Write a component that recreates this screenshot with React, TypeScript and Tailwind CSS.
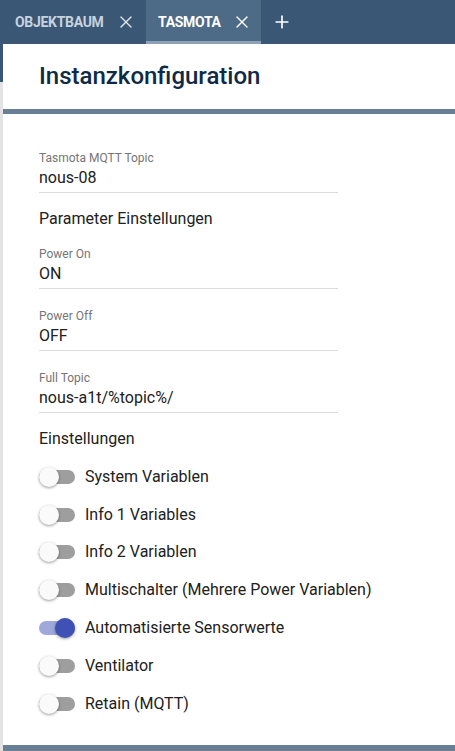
import { X, Plus } from "lucide-react";

type Field = { label: string; value: string };

const topicField: Field = { label: "Tasmota MQTT Topic", value: "nous-08" };

const paramFields: Field[] = [
  { label: "Power On", value: "ON" },
  { label: "Power Off", value: "OFF" },
  { label: "Full Topic", value: "nous-a1t/%topic%/" },
];

const toggles = [
  { label: "System Variablen", on: false },
  { label: "Info 1 Variables", on: false },
  { label: "Info 2 Variablen", on: false },
  { label: "Multischalter (Mehrere Power Variablen)", on: false },
  { label: "Automatisierte Sensorwerte", on: true },
  { label: "Ventilator", on: false },
  { label: "Retain (MQTT)", on: false },
];

function TextField({ field }: { field: Field }) {
  return (
    <div className="w-[299px] border-b border-[#dcdcdc] pb-[5px]">
      <div className="text-[12px] leading-[14px] text-[#757575]">{field.label}</div>
      <div className="mt-[3px] text-[16px] leading-[19px] text-[#212121]">{field.value}</div>
    </div>
  );
}

function Toggle({ on }: { on: boolean }) {
  return (
    <div className="relative h-[20px] w-[36px] shrink-0">
      <div
        className={
          on
            ? "absolute left-0 top-[3px] h-[14px] w-[36px] rounded-full bg-[#9fa8da]"
            : "absolute left-0 top-[3px] h-[14px] w-[36px] rounded-full bg-[#9e9e9e]"
        }
      />
      <div
        className={
          on
            ? "absolute right-0 top-0 h-[20px] w-[20px] rounded-full bg-[#3f51b5] shadow-[0_1px_3px_rgba(0,0,0,0.4)]"
            : "absolute left-0 top-0 h-[20px] w-[20px] rounded-full bg-[#fafafa] shadow-[0_1px_3px_rgba(0,0,0,0.4)]"
        }
      />
    </div>
  );
}

export default function App() {
  return (
    <div
      className="flex h-[751px] w-[455px] flex-col overflow-hidden bg-[#e3e3e3]"
      style={{ fontFamily: "Roboto, 'Liberation Sans', sans-serif" }}
    >
      {/* Tab bar */}
      <div className="flex h-[44px] shrink-0 items-stretch bg-[#3a5775]">
        <div className="flex w-[146px] items-center pl-[15px]">
          <span className="text-[14px] font-bold tracking-[-0.3px] text-[#c8d2dd]">OBJEKTBAUM</span>
          <X className="ml-[12px] h-[20px] w-[20px] text-[#dfe5eb]" strokeWidth={1.6} />
        </div>
        <div className="relative flex w-[115px] items-center bg-[#4d6a87] pl-[12px]">
          <span className="text-[14px] font-bold tracking-[-0.3px] text-white">TASMOTA</span>
          <X className="ml-[11px] h-[20px] w-[20px] text-white" strokeWidth={1.6} />
          <div className="absolute bottom-0 left-0 h-[3px] w-full bg-[#8ea2b7]" />
        </div>
        <div className="flex items-center pl-[11px]">
          <Plus className="h-[20px] w-[20px] text-white" strokeWidth={2} />
        </div>
      </div>

      {/* Body */}
      <div className="flex flex-1">
        <div className="flex w-[3px] shrink-0 flex-col">
          <div className="h-[38px] bg-[#3a5775]" />
        </div>
        <div className="flex flex-1 flex-col bg-white">
          <div className="flex h-[65px] items-center pl-[36px]">
            <h1 className="pb-[2px] text-[24px] font-medium leading-[28px] text-[#102a46]">Instanzkonfiguration</h1>
          </div>
          <div className="h-[5px] bg-[#687f95]" />

          <div className="flex flex-1 flex-col pl-[36px] pt-[37px]">
            <TextField field={topicField} />
            <div className="mt-[16px] text-[16px] leading-[19px] text-[#212121]">Parameter Einstellungen</div>
            <div className="mt-[19px] flex flex-col gap-[20px]">
              {paramFields.map((f) => (
                <TextField key={f.label} field={f} />
              ))}
            </div>
            <div className="mt-[16px] text-[16px] leading-[19px] text-[#212121]">Einstellungen</div>
            <div className="mt-[10px] flex flex-col">
              {toggles.map((t) => (
                <div key={t.label} className="flex h-[37.8px] items-center">
                  <Toggle on={t.on} />
                  <span className="ml-[10px] text-[16px] text-[#212121]">{t.label}</span>
                </div>
              ))}
            </div>
          </div>
          <div className="h-[6px] bg-[#687f95]" />
        </div>
      </div>
    </div>
  );
}
